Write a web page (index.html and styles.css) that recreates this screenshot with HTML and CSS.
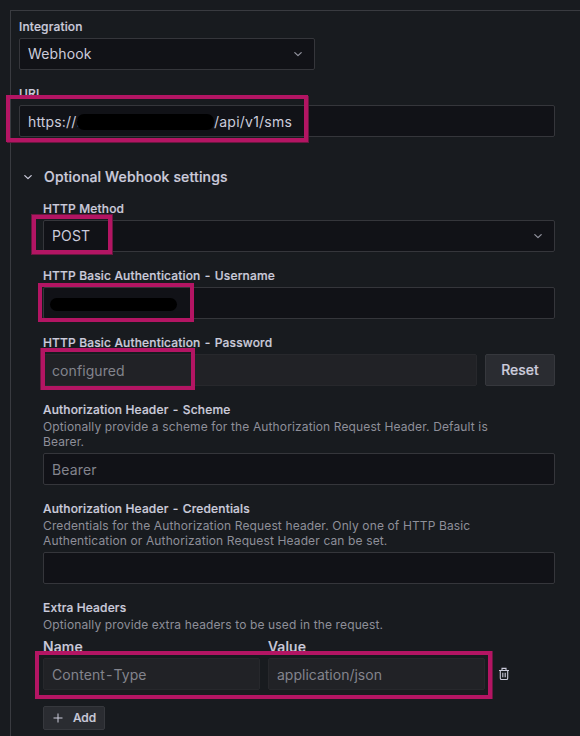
FILE: index.html
```html
<!DOCTYPE html>
<html lang="en">
<head>
<meta charset="utf-8">
<title>Contact point</title>
<link rel="stylesheet" href="styles.css">
</head>
<body>
<main class="panel">
  <div class="field">
    <label class="label">Integration</label>
    <div class="input input--narrow"><span>Webhook</span>
      <svg class="chevron" viewBox="0 0 16 16"><path d="M4.8 6.6 8 9.6l3.2-3"/></svg></div>
  </div>
  <div class="field">
    <label class="label">URL</label>
    <div class="input input--text"><span class="url-head">https://:</span><span class="redacted redacted--host"></span><span class="url-tail">/api/v1/sms</span>
      <span class="mark mark--url"></span></div>
  </div>
  <section class="optional">
    <h2 class="section-title">
      <svg class="chevron chevron--title" viewBox="0 0 16 16"><path d="M4.8 6.6 8 9.6l3.2-3"/></svg>
      <span>Optional Webhook settings</span></h2>
    <div class="optional-body">
      <div class="field">
        <label class="label">HTTP Method</label>
        <div class="input"><span>POST</span>
          <svg class="chevron" viewBox="0 0 16 16"><path d="M4.8 6.6 8 9.6l3.2-3"/></svg>
          <span class="mark mark--method"></span></div>
      </div>
      <div class="field">
        <label class="label">HTTP Basic Authentication <span class="hyphen">-</span> Username</label>
        <div class="input"><span class="redacted redacted--user"></span>
          <span class="mark mark--user"></span></div>
      </div>
      <div class="field">
        <label class="label">HTTP Basic Authentication <span class="hyphen">-</span> Password</label>
        <div class="row">
          <div class="input input--text input--disabled">configured<span class="mark mark--password"></span></div>
          <button class="button button--reset">Reset</button>
        </div>
      </div>
      <div class="field">
        <label class="label">Authorization Header <span class="hyphen">-</span> Scheme</label>
        <p class="description">Optionally provide a scheme for the Authorization Request Header. Default is Bearer.</p>
        <div class="input input--text input--placeholder">Bearer</div>
      </div>
      <div class="field">
        <label class="label">Authorization Header <span class="hyphen">-</span> Credentials</label>
        <p class="description">Credentials for the Authorization Request header. Only one of HTTP Basic Authentication or Authorization Request Header can be set.</p>
        <div class="input"></div>
      </div>
      <div class="field">
        <label class="label">Extra Headers</label>
        <p class="description">Optionally provide extra headers to be used in the request.</p>
        <div class="headers">
          <span class="column-title">Name</span>
          <span class="column-title">Value</span>
          <span></span>
          <div class="input input--text input--disabled">Content<span class="hyphen">-</span>Type</div>
          <div class="input input--text input--disabled input--value">application/json</div>
          <svg class="trash" viewBox="0 0 12 14"><path d="M1 3.5h10M4 3V1.4h4V3M2.3 4v7.2q0 1.3 1.2 1.3h5q1.2 0 1.2-1.3V4M4.8 5.7v4.6M7.2 5.7v4.6"/></svg>
          <span class="mark mark--headers"></span>
        </div>
      </div>
      <button class="button button--add">
        <svg class="plus" viewBox="0 0 10 10"><path d="M5 .5v9M.5 5h9"/></svg>Add</button>
    </div>
  </section>
</main>
</body>
</html>
```
FILE: styles.css
```css
* { box-sizing: border-box; }

body {
  margin: 0;
  height: 736px;
  overflow: hidden;
  background: #181b1f;
  color: #ccccdc;
  font: 400 14px/22px Inter, "Liberation Sans", sans-serif;
  letter-spacing: 0.15px;
}

.panel {
  margin: 10px 0 0 10px;
  height: 740px;
  padding: 8px 25px 0 8px;
  border: 1px solid #393b40;
  border-right: 0;
}

.field { margin-bottom: 16px; }

.label {
  display: block;
  margin-bottom: 4px;
  font-size: 12px;
  font-weight: 500;
  line-height: 15px;
}

.label,
.section-title,
.column-title,
.button { -webkit-text-stroke: 0.2px #ccccdc; }

.hyphen { margin: 0 1px; }

.description {
  margin: -2px 0 4px;
  width: 460px;
  color: #8e8f99;
  font-size: 12px;
  line-height: 15px;
  letter-spacing: 0.13px;
}

.input {
  position: relative;
  display: flex;
  align-items: center;
  flex: 1;
  height: 32px;
  padding: 0 8px;
  background: #111217;
  border: 1px solid #35363b;
  border-radius: 2px;
}

.input--text { padding-top: 2px; }
.input--narrow { width: 296px; }
.input--placeholder { color: #83848d; }

.input--disabled {
  background: #212226;
  border-color: #27282c;
  color: #83848d;
  letter-spacing: 0.08px;
}

.input--value { letter-spacing: 0; }

.chevron {
  width: 16px;
  height: 16px;
  margin-left: auto;
  fill: none;
  stroke: #92939e;
  stroke-width: 1.3;
  stroke-linecap: round;
  stroke-linejoin: round;
}

.chevron--title {
  margin: 0;
  stroke: #ccccdc;
}

.redacted {
  position: relative;
  background: #000;
  border-radius: 7px;
}

.url-head { width: 49px; white-space: nowrap; }
.url-tail { letter-spacing: 0.23px; }
.redacted--host { width: 137px; height: 16px; }
.redacted--user { width: 127px; height: 13px; margin: 2px 0 0 -2px; }

.section-title {
  display: flex;
  align-items: center;
  gap: 8px;
  height: 24px;
  margin: 28px 0 12px 1px;
  font-size: 14px;
  font-weight: 500;
}

.optional-body { padding-left: 24px; }
.row { display: flex; gap: 8px; }

.button {
  display: flex;
  align-items: center;
  justify-content: center;
  padding: 0;
  background: #2a2c31;
  border: 1px solid #36383d;
  border-radius: 2px;
  color: #ccccdc;
  font: inherit;
  font-weight: 500;
}

.button--reset { width: 70px; height: 32px; }

.button--add {
  gap: 10px;
  width: 62px;
  height: 24px;
  padding-left: 1px;
  font-size: 12px;
}

.plus {
  width: 10px;
  height: 10px;
  fill: none;
  stroke: #ccccdc;
}

.headers {
  position: relative;
  display: grid;
  grid-template-columns: 217px 217px 12px;
  column-gap: 8px;
  align-items: center;
}

.column-title { font-weight: 500; }

.trash {
  width: 12px;
  height: 14px;
  margin-left: 5px;
  fill: none;
  stroke: #ccccdc;
  stroke-width: 1.1;
}

/* Highlight frames laid over the form */
.mark {
  position: absolute;
  z-index: 1;
  border: 4px solid #b31563;
}

.mark--url { left: -14px; top: -11px; width: 302px; height: 47px; box-shadow: 1px 1px 0 #6a1740; }
.mark--method { left: -12px; top: -6px; width: 80px; height: 39px; box-shadow: 0 0 0 1px #6a1740; }
.mark--user { left: -6px; top: -5px; width: 156px; height: 39px; }
.mark--password { left: -3px; top: -7px; width: 154px; height: 42px; box-shadow: -1px 0 0 #6a1740; }
.mark--headers { left: -8px; top: 15px; width: 457px; height: 48px; box-shadow: 1px 0 0 #6a1740; }
```
